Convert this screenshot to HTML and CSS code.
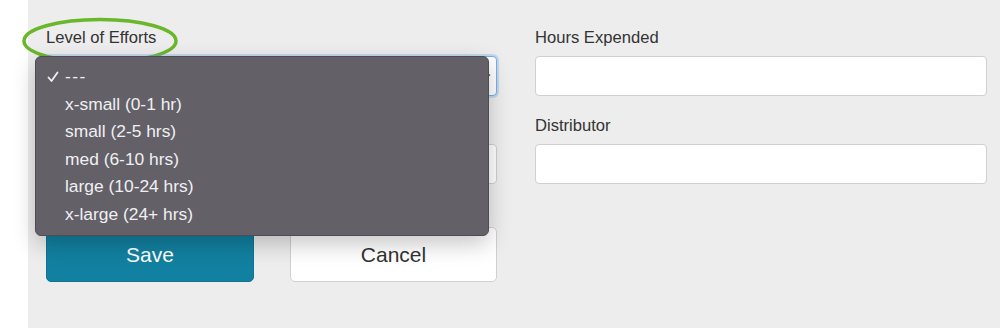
FILE: index.html
```html
<!DOCTYPE html>
<html lang="en">

<head>
  <meta name="viewport" content="width=device-width, initial-scale=1">
  <link rel="stylesheet" href="styles.css">
  <title>Task details</title>
</head>

<body>
  <div id="page_div">
    <div class="form_grid">
      <!-- Left column -->
      <div class="field">
        <label for="effort" class="field_label highlight">Level of Efforts
          <svg class="highlight_ring" width="158" height="48" viewBox="0 0 158 48">
            <ellipse cx="79" cy="24" rx="76" ry="21.5" fill="none" stroke="#69b72b" stroke-width="3.5" />
          </svg>
        </label>
        <div class="select_wrap">
          <div id="effort" class="select_box focused">
            <svg class="chevron" width="10" height="10" viewBox="0 0 10 10">
              <path d="M2 3.5 L5 6.5 L8 3.5" fill="none" stroke="#555" stroke-width="1.3" />
            </svg>
          </div>
          <!-- Open option list -->
          <ul class="option_menu">
            <li class="selected">
              <svg class="tick" width="12" height="12" viewBox="0 0 12 12">
                <path d="M1.5 6.5 L4.5 10 L10.5 1.5" fill="none" stroke="#f0f0f2" stroke-width="1.8"
                  stroke-linecap="round" stroke-linejoin="round" />
              </svg>---
            </li>
            <li>x-small (0-1 hr)</li>
            <li>small (2-5 hrs)</li>
            <li>med (6-10 hrs)</li>
            <li>large (10-24 hrs)</li>
            <li>x-large (24+ hrs)</li>
          </ul>
        </div>
      </div>

      <!-- Right column -->
      <div class="field">
        <label for="hours" class="field_label">Hours Expended</label>
        <input type="text" id="hours" class="text_box">
      </div>

      <div class="field">
        <label for="owner" class="field_label">&nbsp;</label>
        <input type="text" id="owner" class="text_box">
      </div>

      <div class="field">
        <label for="distributor" class="field_label">Distributor</label>
        <input type="text" id="distributor" class="text_box">
      </div>

      <div class="button_row">
        <button id="save_btn" class="btn btn_primary">Save</button>
        <button id="cancel_btn" class="btn btn_plain">Cancel</button>
      </div>
    </div>
  </div>
</body>

</html>
```

FILE: styles.css
```css
body {
  margin: 0px;
  background-color: white;
  font-family: "Liberation Sans", Arial, Helvetica, sans-serif;
  color: rgb(51, 51, 51);
}

#page_div {
  margin-left: 28px;
  min-height: 328px;
  box-sizing: border-box;
  background-color: rgb(237, 237, 237);
  padding: 28px 0px 0px 18px;
}

.form_grid {
  display: grid;
  grid-template-columns: 451px 452px;
  column-gap: 38px;
  row-gap: 20px;
}

.field {
  display: flex;
  flex-direction: column;
}

.field_label {
  font-size: 16.6px;
  line-height: 20px;
  height: 20px;
  margin-bottom: 8px;
}

.highlight {
  position: relative;
  align-self: flex-start;
}

.highlight_ring {
  position: absolute;
  left: -25px;
  top: -11px;
}

.text_box,
.select_box {
  box-sizing: border-box;
  height: 40px;
  width: 100%;
  margin: 0px;
  border: 1px solid rgb(208, 208, 208);
  border-radius: 4px;
  background-color: white;
  font-size: 16px;
}

.select_wrap {
  position: relative;
}

.select_box {
  position: relative;
}

.select_box.focused {
  border-color: rgb(118, 176, 236);
  box-shadow: 0 0 0 2px rgba(120, 175, 235, 0.35);
}

.chevron {
  position: absolute;
  right: 4px;
  top: 14px;
}

.option_menu {
  position: absolute;
  left: -11px;
  top: 0px;
  width: 454px;
  box-sizing: border-box;
  margin: 0px;
  padding: 6px 0px;
  list-style: none;
  background-color: rgb(99, 96, 104);
  border: 1px solid rgb(78, 76, 82);
  border-radius: 6px;
  box-shadow: 0 8px 22px rgba(0, 0, 0, 0.22);
  z-index: 2;
}

.option_menu li {
  position: relative;
  height: 27.6px;
  line-height: 27.6px;
  padding-left: 29px;
  font-size: 17.4px;
  color: rgb(240, 240, 242);
}

.option_menu li.selected {
  letter-spacing: 1.5px;
}

.tick {
  position: absolute;
  left: 11px;
  top: 8px;
}

.button_row {
  display: grid;
  grid-template-columns: 208px 207px;
  column-gap: 36px;
  margin-top: 23px;
}

.btn {
  height: 55px;
  font-family: inherit;
  font-size: 21px;
  border-radius: 5px;
  cursor: pointer;
}

.btn_primary {
  background-color: rgb(18, 128, 160);
  border: 1px solid rgb(16, 116, 146);
  color: white;
}

.btn_plain {
  background-color: white;
  border: 1px solid rgb(208, 208, 208);
  color: rgb(51, 51, 51);
}
```
